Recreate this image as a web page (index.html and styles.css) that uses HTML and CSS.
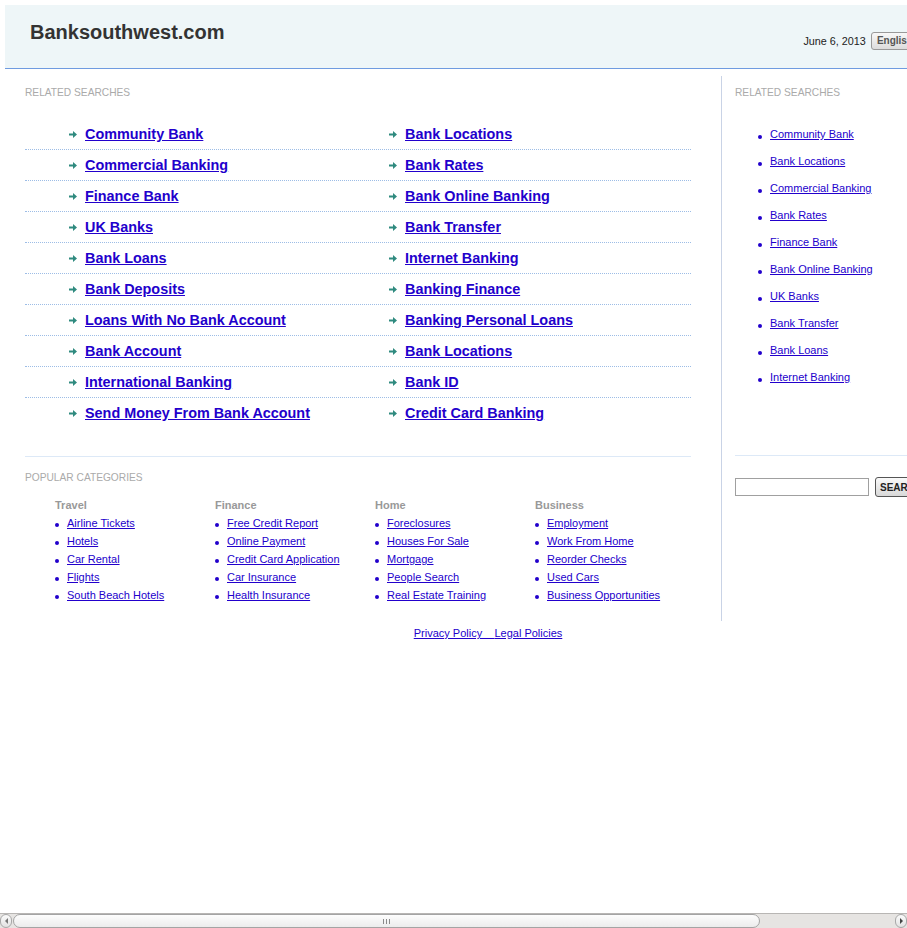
FILE: index.html
```html
<!DOCTYPE html>
<html lang="en">
<head>
<meta charset="utf-8">
<title>Banksouthwest.com</title>
<link rel="stylesheet" href="styles.css">
</head>
<body>
<div class="page">
  <div class="header">
    <div class="title">Banksouthwest.com</div>
    <div class="header-right">
      <span class="date">June 6, 2013</span>
      <button class="lang">English</button>
    </div>
  </div>
  <div class="content">
    <div class="main">
      <div class="label">RELATED SEARCHES</div>
      <ul class="rs">
        <li><span class="cell"><svg class="arr" width="8" height="7" viewBox="0 0 8 7"><path d="M0 2.5h4V0l4 3.5L4 7V4.5H0z" fill="#2f8a7f"/></svg><a href="#">Community Bank</a></span><span class="cell"><svg class="arr" width="8" height="7" viewBox="0 0 8 7"><path d="M0 2.5h4V0l4 3.5L4 7V4.5H0z" fill="#2f8a7f"/></svg><a href="#">Bank Locations</a></span></li>
        <li><span class="cell"><svg class="arr" width="8" height="7" viewBox="0 0 8 7"><path d="M0 2.5h4V0l4 3.5L4 7V4.5H0z" fill="#2f8a7f"/></svg><a href="#">Commercial Banking</a></span><span class="cell"><svg class="arr" width="8" height="7" viewBox="0 0 8 7"><path d="M0 2.5h4V0l4 3.5L4 7V4.5H0z" fill="#2f8a7f"/></svg><a href="#">Bank Rates</a></span></li>
        <li><span class="cell"><svg class="arr" width="8" height="7" viewBox="0 0 8 7"><path d="M0 2.5h4V0l4 3.5L4 7V4.5H0z" fill="#2f8a7f"/></svg><a href="#">Finance Bank</a></span><span class="cell"><svg class="arr" width="8" height="7" viewBox="0 0 8 7"><path d="M0 2.5h4V0l4 3.5L4 7V4.5H0z" fill="#2f8a7f"/></svg><a href="#">Bank Online Banking</a></span></li>
        <li><span class="cell"><svg class="arr" width="8" height="7" viewBox="0 0 8 7"><path d="M0 2.5h4V0l4 3.5L4 7V4.5H0z" fill="#2f8a7f"/></svg><a href="#">UK Banks</a></span><span class="cell"><svg class="arr" width="8" height="7" viewBox="0 0 8 7"><path d="M0 2.5h4V0l4 3.5L4 7V4.5H0z" fill="#2f8a7f"/></svg><a href="#">Bank Transfer</a></span></li>
        <li><span class="cell"><svg class="arr" width="8" height="7" viewBox="0 0 8 7"><path d="M0 2.5h4V0l4 3.5L4 7V4.5H0z" fill="#2f8a7f"/></svg><a href="#">Bank Loans</a></span><span class="cell"><svg class="arr" width="8" height="7" viewBox="0 0 8 7"><path d="M0 2.5h4V0l4 3.5L4 7V4.5H0z" fill="#2f8a7f"/></svg><a href="#">Internet Banking</a></span></li>
        <li><span class="cell"><svg class="arr" width="8" height="7" viewBox="0 0 8 7"><path d="M0 2.5h4V0l4 3.5L4 7V4.5H0z" fill="#2f8a7f"/></svg><a href="#">Bank Deposits</a></span><span class="cell"><svg class="arr" width="8" height="7" viewBox="0 0 8 7"><path d="M0 2.5h4V0l4 3.5L4 7V4.5H0z" fill="#2f8a7f"/></svg><a href="#">Banking Finance</a></span></li>
        <li><span class="cell"><svg class="arr" width="8" height="7" viewBox="0 0 8 7"><path d="M0 2.5h4V0l4 3.5L4 7V4.5H0z" fill="#2f8a7f"/></svg><a href="#">Loans With No Bank Account</a></span><span class="cell"><svg class="arr" width="8" height="7" viewBox="0 0 8 7"><path d="M0 2.5h4V0l4 3.5L4 7V4.5H0z" fill="#2f8a7f"/></svg><a href="#">Banking Personal Loans</a></span></li>
        <li><span class="cell"><svg class="arr" width="8" height="7" viewBox="0 0 8 7"><path d="M0 2.5h4V0l4 3.5L4 7V4.5H0z" fill="#2f8a7f"/></svg><a href="#">Bank Account</a></span><span class="cell"><svg class="arr" width="8" height="7" viewBox="0 0 8 7"><path d="M0 2.5h4V0l4 3.5L4 7V4.5H0z" fill="#2f8a7f"/></svg><a href="#">Bank Locations</a></span></li>
        <li><span class="cell"><svg class="arr" width="8" height="7" viewBox="0 0 8 7"><path d="M0 2.5h4V0l4 3.5L4 7V4.5H0z" fill="#2f8a7f"/></svg><a href="#">International Banking</a></span><span class="cell"><svg class="arr" width="8" height="7" viewBox="0 0 8 7"><path d="M0 2.5h4V0l4 3.5L4 7V4.5H0z" fill="#2f8a7f"/></svg><a href="#">Bank ID</a></span></li>
        <li><span class="cell"><svg class="arr" width="8" height="7" viewBox="0 0 8 7"><path d="M0 2.5h4V0l4 3.5L4 7V4.5H0z" fill="#2f8a7f"/></svg><a href="#">Send Money From Bank Account</a></span><span class="cell"><svg class="arr" width="8" height="7" viewBox="0 0 8 7"><path d="M0 2.5h4V0l4 3.5L4 7V4.5H0z" fill="#2f8a7f"/></svg><a href="#">Credit Card Banking</a></span></li>
      </ul>
      <div class="sep"></div>
      <div class="label label-pop">POPULAR CATEGORIES</div>
      <div class="cats">
        <div class="cat">
          <div class="cat-h">Travel</div>
          <ul class="dots">
            <li><a href="#">Airline Tickets</a></li>
            <li><a href="#">Hotels</a></li>
            <li><a href="#">Car Rental</a></li>
            <li><a href="#">Flights</a></li>
            <li><a href="#">South Beach Hotels</a></li>
          </ul>
        </div>
        <div class="cat">
          <div class="cat-h">Finance</div>
          <ul class="dots">
            <li><a href="#">Free Credit Report</a></li>
            <li><a href="#">Online Payment</a></li>
            <li><a href="#">Credit Card Application</a></li>
            <li><a href="#">Car Insurance</a></li>
            <li><a href="#">Health Insurance</a></li>
          </ul>
        </div>
        <div class="cat">
          <div class="cat-h">Home</div>
          <ul class="dots">
            <li><a href="#">Foreclosures</a></li>
            <li><a href="#">Houses For Sale</a></li>
            <li><a href="#">Mortgage</a></li>
            <li><a href="#">People Search</a></li>
            <li><a href="#">Real Estate Training</a></li>
          </ul>
        </div>
        <div class="cat">
          <div class="cat-h">Business</div>
          <ul class="dots">
            <li><a href="#">Employment</a></li>
            <li><a href="#">Work From Home</a></li>
            <li><a href="#">Reorder Checks</a></li>
            <li><a href="#">Used Cars</a></li>
            <li><a href="#">Business Opportunities</a></li>
          </ul>
        </div>
      </div>
    </div>
    <div class="side">
      <div class="label">RELATED SEARCHES</div>
      <ul class="dots side-list">
        <li><a href="#">Community Bank</a></li>
        <li><a href="#">Bank Locations</a></li>
        <li><a href="#">Commercial Banking</a></li>
        <li><a href="#">Bank Rates</a></li>
        <li><a href="#">Finance Bank</a></li>
        <li><a href="#">Bank Online Banking</a></li>
        <li><a href="#">UK Banks</a></li>
        <li><a href="#">Bank Transfer</a></li>
        <li><a href="#">Bank Loans</a></li>
        <li><a href="#">Internet Banking</a></li>
      </ul>
      <div class="sep side-sep"></div>
      <form class="search">
        <input type="text" class="q">
        <button type="button" class="go">SEARCH</button>
      </form>
    </div>
  </div>
  <div class="footer"><a href="#">Privacy Policy&nbsp;&nbsp;&nbsp;&nbsp;</a><a href="#">Legal Policies</a></div>
</div>
<div class="hscroll" aria-hidden="true">
  <span class="hs-btn hs-left"></span>
  <span class="hs-track"><span class="hs-thumb"><span class="hs-grip"></span></span></span>
  <span class="hs-btn hs-right"></span>
</div>
</body>
</html>
```

FILE: styles.css
```css
html, body {
  margin: 0;
  padding: 0;
}
html {
  scrollbar-width: none;
}
body {
  padding: 5px 0 0 5px;
  font-family: "Liberation Sans", Arial, sans-serif;
  background: #fff;
  color: #333;
}
.page {
  width: 966px;
}
a {
  color: #2200cc;
}
ul {
  list-style: none;
  margin: 0;
  padding: 0;
}
.header {
  display: flex;
  justify-content: space-between;
  height: 63px;
  background: #eef6f8;
  border-bottom: 1px solid #6f9be0;
}
.title {
  padding: 15px 0 0 25px;
  font-size: 20px;
  line-height: 24px;
  font-weight: bold;
  color: #333;
}
.header-right {
  display: flex;
  align-items: center;
  gap: 5px;
  padding: 27px 52px 0 0;
  height: 17px;
}
.date {
  font-size: 10.8px;
  color: #222;
}
.lang {
  height: 18px;
  padding: 0 5px;
  font-family: "Liberation Sans", Arial, sans-serif;
  font-size: 10px;
  font-weight: bold;
  color: #555;
  background: linear-gradient(#f8f8f8, #dcdcdc);
  border: 1px solid #999;
  border-radius: 3px;
}
.content {
  display: flex;
  margin-top: 7px;
}
.main {
  width: 666px;
  padding: 10px 30px 17px 20px;
}
.label {
  font-size: 10.2px;
  line-height: 13px;
  color: #aaa;
}
.rs {
  margin-top: 20px;
}
.rs li {
  display: grid;
  grid-template-columns: 320px 1fr;
  height: 30px;
  border-bottom: 1px dotted #9dbde6;
}
.rs li:last-child {
  border-bottom: none;
}
.cell {
  display: flex;
  align-items: center;
  padding-left: 44px;
}
.arr {
  flex: none;
  margin-right: 8px;
}
.rs a {
  font-size: 14.4px;
  font-weight: bold;
  line-height: 18px;
}
.sep {
  height: 0;
  border-top: 1px solid #dde9f7;
  margin-top: 28px;
}
.label-pop {
  margin-top: 14px;
}
.cats {
  display: grid;
  grid-template-columns: repeat(4, 160px);
  margin-top: 12px;
  padding-left: 30px;
}
.cat-h {
  font-size: 11px;
  line-height: 18px;
  font-weight: bold;
  color: #999;
}
.dots li {
  display: flex;
  align-items: center;
  font-size: 11px;
  line-height: 18px;
}
.dots li::before {
  content: "";
  flex: none;
  width: 4px;
  height: 4px;
  border-radius: 2px;
  background: #2200cc;
  margin: 4px 8px 0 0;
}
.side {
  flex: 1;
  border-left: 1px solid #c9d3e6;
  padding: 10px 0 0 13px;
}
.side-list {
  margin-top: 22px;
  padding-left: 23px;
}
.side-list li {
  line-height: 27px;
}
.side-sep {
  margin-top: 64px;
}
.search {
  display: flex;
  align-items: center;
  gap: 6px;
  margin: 21px 0 0 0;
}
.q {
  width: 128px;
  height: 14px;
  padding: 1px 2px;
  margin: 0;
  border: 1px solid #a0a0a0;
}
.go {
  height: 20px;
  padding: 0 4px;
  margin: 0;
  font-family: "Liberation Sans", Arial, sans-serif;
  font-size: 10px;
  font-weight: bold;
  color: #222;
  background: linear-gradient(#fafafa, #d8d8d8);
  border: 1px solid #555;
  border-radius: 3px;
}
.footer {
  display: flex;
  justify-content: center;
  padding-top: 6px;
  font-size: 11px;
  line-height: 13px;
}
.hscroll {
  position: fixed;
  left: 0;
  right: 0;
  bottom: 0;
  height: 14px;
  display: flex;
  align-items: stretch;
  background: #e6e4e2;
  border-top: 1px solid #b8b6b4;
}
.hs-btn {
  flex: none;
  width: 12px;
  display: flex;
  align-items: center;
  justify-content: center;
  background: linear-gradient(#fbfbfb, #e2e2e2);
  border: 1px solid #a8a8a8;
  border-radius: 6px;
  box-sizing: border-box;
}
.hs-left::before {
  content: "";
  border-style: solid;
  border-width: 3px 3px 3px 0;
  border-color: transparent #777 transparent transparent;
}
.hs-right::before {
  content: "";
  border-style: solid;
  border-width: 3px 0 3px 3px;
  border-color: transparent transparent transparent #444;
}
.hs-track {
  flex: 1;
  display: flex;
  padding: 0 2px 0 1px;
}
.hs-thumb {
  width: 747px;
  display: flex;
  align-items: center;
  justify-content: center;
  box-sizing: border-box;
  background: linear-gradient(#fdfdfd, #ececec);
  border: 1px solid #a4a4a4;
  border-radius: 7px;
}
.hs-grip {
  width: 7px;
  height: 5px;
  background: repeating-linear-gradient(90deg, #8a8a8a 0 1px, transparent 1px 3px);
}
```
